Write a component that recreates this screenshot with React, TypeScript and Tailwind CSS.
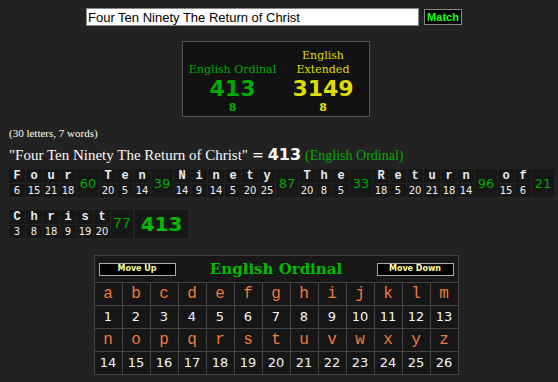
const words: { letters: [string, number][]; total: number }[] = [
  { letters: [['F', 6], ['o', 15], ['u', 21], ['r', 18]], total: 60 },
  { letters: [['T', 20], ['e', 5], ['n', 14]], total: 39 },
  { letters: [['N', 14], ['i', 9], ['n', 14], ['e', 5], ['t', 20], ['y', 25]], total: 87 },
  { letters: [['T', 20], ['h', 8], ['e', 5]], total: 33 },
  { letters: [['R', 18], ['e', 5], ['t', 20], ['u', 21], ['r', 18], ['n', 14]], total: 96 },
  { letters: [['o', 15], ['f', 6]], total: 21 },
  { letters: [['C', 3], ['h', 8], ['r', 18], ['i', 9], ['s', 19], ['t', 20]], total: 77 },
]

const alphabet = 'abcdefghijklmnopqrstuvwxyz'.split('')

function Word({ w, last }: { w: (typeof words)[number]; last?: boolean }) {
  return (
    <div className="flex gap-px mr-px mb-[13px] h-[28px] leading-none">
      {w.letters.map(([l, n], i) => (
        <div key={i} className="flex flex-col gap-px w-[16px]">
          <div className="h-[14px] bg-[#171717] flex items-center justify-center font-['Liberation_Mono',monospace] font-bold text-[12px] text-[#e8eef4]">
            {l}
          </div>
          <div className="h-[13px] bg-[#171717] flex items-center justify-center font-['DejaVu_Sans',sans-serif] text-[10px] text-[#f0f0f0]">
            {n}
          </div>
        </div>
      ))}
      <div
        className={
          'w-[22px] bg-[#171717] flex items-center justify-center text-[#0a0] ' +
          (last ? "font-['Liberation_Mono',monospace] text-[15px]" : "font-['DejaVu_Sans',sans-serif] text-[13px]")
        }
      >
        {w.total}
      </div>
      {last && (
        <div className="w-[53px] ml-px bg-[#171717] flex items-center justify-center font-['DejaVu_Sans',sans-serif] font-bold text-[20px] text-[#0b0]">
          413
        </div>
      )}
    </div>
  )
}

function Row({ items, kind }: { items: string[]; kind: 'l' | 'n' }) {
  return (
    <>
      {items.map(x => (
        <div
          key={x}
          className={
            'h-[22px] bg-[#161616] flex items-center justify-center ' +
            (kind === 'l'
              ? "font-['Liberation_Mono',monospace] text-[16px] text-[#f07a3a]"
              : "font-['DejaVu_Sans',sans-serif] text-[13px] text-[#f4f4f4]")
          }
        >
          {x}
        </div>
      ))}
    </>
  )
}

export default function App() {
  const nums1 = Array.from({ length: 13 }, (_, i) => String(i + 1))
  const nums2 = Array.from({ length: 13 }, (_, i) => String(i + 14))
  return (
    <main className="min-h-screen w-[558px] h-[382px] bg-[#222] overflow-hidden">
      <div className="w-[552px] flex flex-col">
        <div className="flex items-center pt-[8px] pl-[86px] gap-[5px]">
          <div className="w-[333px] h-[18px] bg-white border border-[#888] pl-[1px] flex items-center font-['Liberation_Sans',sans-serif] text-[13px] text-black leading-none">
            Four Ten Ninety The Return of Christ
          </div>
          <div className="w-[38px] h-[16px] bg-black border border-[#888] flex items-center justify-center font-['Liberation_Sans',sans-serif] font-bold text-[11px] text-[#1f1]">
            Match
          </div>
        </div>

        <div className="self-center mt-[15px] w-[188px] h-[76px] bg-[#111] border border-[#555] flex items-end pb-[2px]">
          <div className="w-[99px] flex flex-col items-center text-[#0a0]">
            <div className="font-['DejaVu_Serif',serif] text-[11px] leading-[14px]">English Ordinal</div>
            <div className="font-['DejaVu_Sans',sans-serif] font-bold text-[22px] leading-[24px]">413</div>
            <div className="font-['DejaVu_Sans',sans-serif] font-bold text-[11px] leading-[13px]">8</div>
          </div>
          <div className="w-[82px] flex flex-col items-center text-[#dd0]">
            <div className="font-['DejaVu_Serif',serif] text-[11px] leading-[14px] text-center">
              English
              <br />
              Extended
            </div>
            <div className="font-['DejaVu_Sans',sans-serif] font-bold text-[22px] leading-[24px]">3149</div>
            <div className="font-['DejaVu_Sans',sans-serif] font-bold text-[11px] leading-[13px]">8</div>
          </div>
        </div>

        <div className="pl-[9px] mt-[9px] font-['Liberation_Serif',serif] text-[11px] text-[#ffffe8] leading-[14px]">
          (30 letters, 7 words)
        </div>

        <div className="pl-[9px] mt-[4px] flex items-baseline gap-[4px] leading-[22px]">
          <span className="font-['Liberation_Serif',serif] text-[15px] text-[#f8f8f8]">
            "Four Ten Ninety The Return of Christ"
          </span>
          <span className="font-['DejaVu_Sans',sans-serif] text-[14px] text-white">=</span>
          <span className="font-['DejaVu_Sans',sans-serif] font-bold text-[16px] text-white">413</span>
          <span className="font-['Liberation_Serif',serif] text-[14px] text-[#0a0]">(English Ordinal)</span>
        </div>

        <div className="pl-[9px] mt-[2px] flex flex-wrap w-[558px]">
          {words.map((w, i) => (
            <Word key={i} w={w} last={i === words.length - 1} />
          ))}
        </div>

        <div className="self-center mt-[4px] w-[365px] border border-[#444] bg-[#181818]">
          <div className="h-[26px] flex items-center px-[4px]">
            <div className="w-[77px] h-[13px] bg-black border border-[#aaa] flex items-center justify-center font-['DejaVu_Sans',sans-serif] font-bold text-[8px] text-[#ffffa0]">
              Move Up
            </div>
            <div className="flex-1 text-center font-['DejaVu_Serif',serif] font-bold text-[15px] text-[#0b0]">
              English Ordinal
            </div>
            <div className="w-[77px] h-[13px] bg-black border border-[#aaa] flex items-center justify-center font-['DejaVu_Sans',sans-serif] font-bold text-[8px] text-[#ffffa0]">
              Move Down
            </div>
          </div>
          <div className="grid grid-cols-[repeat(13,27px)] gap-px bg-[#444] pt-px">
            <Row items={alphabet.slice(0, 13)} kind="l" />
            <Row items={nums1} kind="n" />
            <Row items={alphabet.slice(13)} kind="l" />
            <Row items={nums2} kind="n" />
          </div>
        </div>
      </div>
    </main>
  )
}
